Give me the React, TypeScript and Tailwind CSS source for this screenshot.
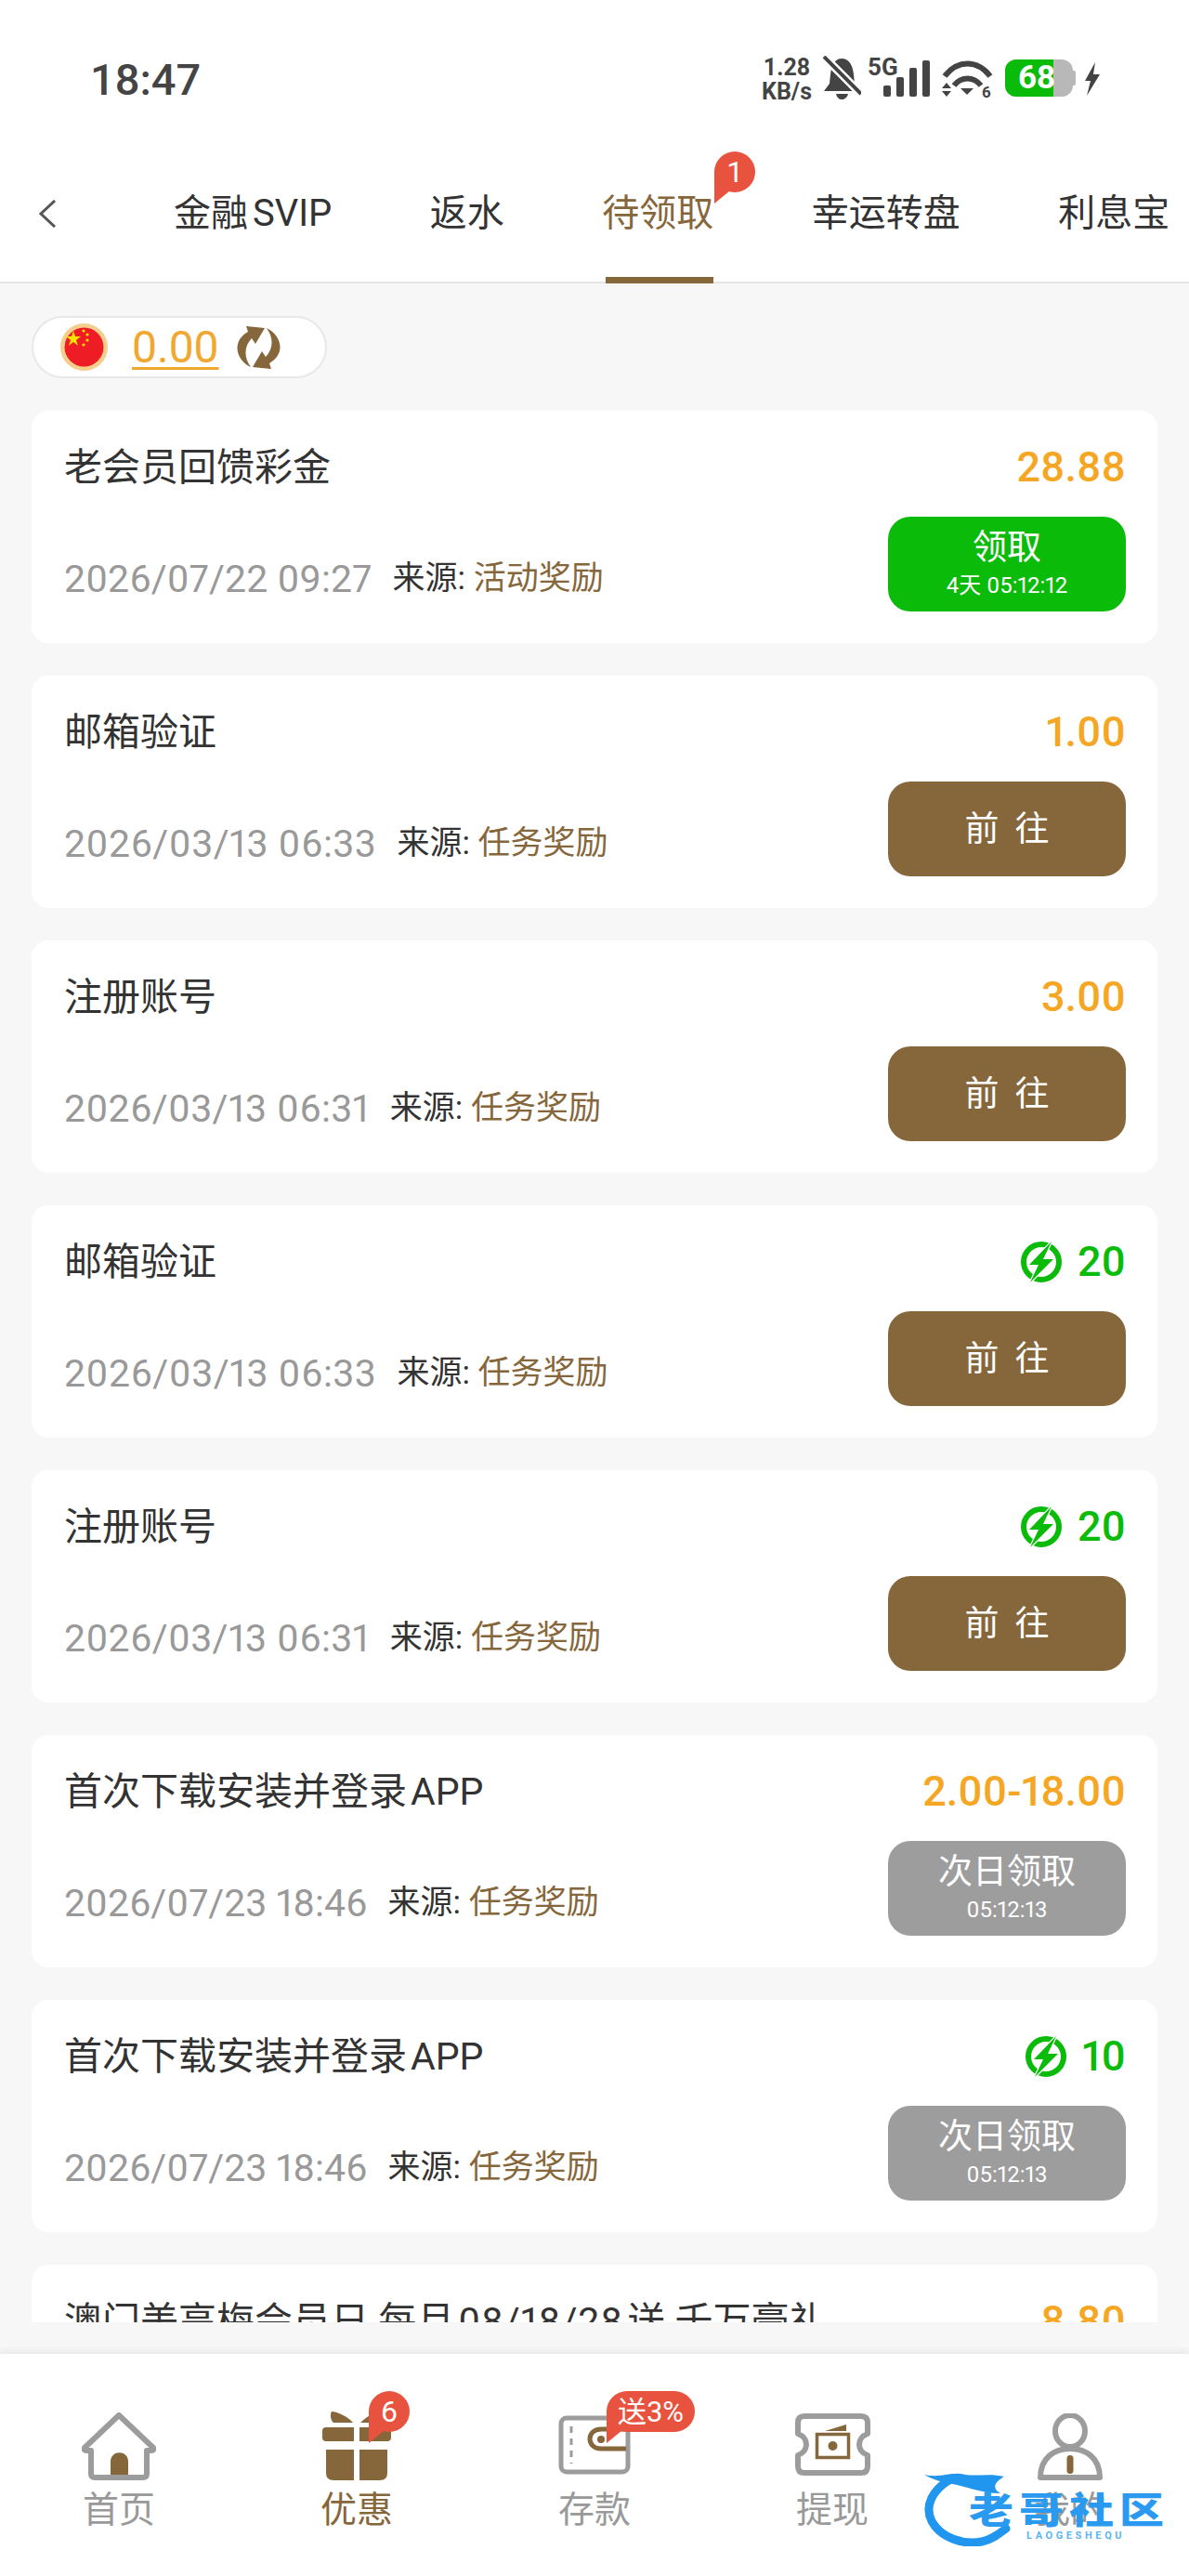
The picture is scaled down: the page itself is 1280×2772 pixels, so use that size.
import React from "react";

const FONT = "[font-family:Roboto,'Noto_Sans_CJK_SC',sans-serif]";

function Badge({ children, wide }: { children: React.ReactNode; wide?: boolean }) {
  return (
    <span className={`relative flex h-[44px] items-center justify-center rounded-full bg-[#e8533f] text-white ${wide ? "w-[95px] text-[31px]" : "w-[44px] text-[32px]"}`}>
      <svg className="absolute left-0 top-[20px]" width="22" height="36" viewBox="0 0 22 36">
        <path d="M0 0 L0 36 L22 18 Z" fill="#e8533f" />
      </svg>
      <span className="relative leading-none">{children}</span>
    </span>
  );
}

function Flag() {
  return (
    <svg width="51" height="51" viewBox="0 0 51 51">
      <circle cx="25.5" cy="25.5" r="25.5" fill="#f4cf8c" />
      <circle cx="25.5" cy="25.5" r="21" fill="#ee1c25" />
      <polygon points="14,8 16,14 22,14 17,18 19,24 14,20 9,24 11,18 6,14 12,14" fill="#ffe100" />
      <circle cx="25" cy="8" r="1.6" fill="#ffe100" />
      <circle cx="29" cy="12" r="1.6" fill="#ffe100" />
      <circle cx="29" cy="18" r="1.6" fill="#ffe100" />
      <circle cx="25" cy="23" r="1.6" fill="#ffe100" />
    </svg>
  );
}

function Refresh() {
  return (
    <svg width="47" height="48" viewBox="0 0 47 48" fill="#86673c">
      <path d="M10 1L30 3L20 20L16 14C8 22 7 34 15 45C0 38 -7 18 12 7Z" />
      <path d="M37 47L17 45L27 28L31 34C39 26 40 14 32 3C47 10 54 30 35 41Z" />
    </svg>
  );
}

function BoltCircle() {
  return (
    <svg width="44" height="46" viewBox="0 0 44 46">
      <circle cx="22" cy="23" r="19" fill="none" stroke="#0abb0a" strokeWidth="6" />
      <path d="M33 1 L9 26 L19 26 L10 45 L35 20 L24 20 Z" fill="#0abb0a" stroke="#fff" strokeWidth="2.5" paintOrder="stroke" strokeLinejoin="round" />
    </svg>
  );
}

type Item = {
  title: React.ReactNode;
  time: string;
  track: string;
  source: string;
  amount?: string;
  bolt?: string;
  btn: "claim" | "go" | "next";
  sub?: string;
};

const appTitle = (
  <>
    首次下载安装并登录<span className="ml-[4px]">APP</span>
  </>
);

const items: Item[] = [
  { title: "老会员回馈彩金", time: "2026/07/22 09:27", track: "tracking-[0.1px]", source: "活动奖励", amount: "28.88", btn: "claim", sub: "4天 05:12:12" },
  { title: "邮箱验证", time: "2026/03/13 06:33", track: "tracking-[0.5px]", source: "任务奖励", amount: "1.00", btn: "go" },
  { title: "注册账号", time: "2026/03/13 06:31", track: "tracking-[0.35px]", source: "任务奖励", amount: "3.00", btn: "go" },
  { title: "邮箱验证", time: "2026/03/13 06:33", track: "tracking-[0.5px]", source: "任务奖励", bolt: "20", btn: "go" },
  { title: "注册账号", time: "2026/03/13 06:31", track: "tracking-[0.35px]", source: "任务奖励", bolt: "20", btn: "go" },
  { title: appTitle, time: "2026/07/23 18:46", track: "tracking-normal", source: "任务奖励", amount: "2.00-18.00", btn: "next", sub: "05:12:13" },
  { title: appTitle, time: "2026/07/23 18:46", track: "tracking-normal", source: "任务奖励", bolt: "10", btn: "next", sub: "05:12:13" },
  {
    title: (
      <>
        澳门美高梅会员日 每月<span className="mx-[4px] tracking-[1px]">08/18/28</span>送 千万豪礼
      </>
    ),
    time: "2026/07/23 18:46",
    track: "tracking-normal",
    source: "任务奖励",
    amount: "8.80",
    btn: "go",
  },
];

function ActionButton({ item }: { item: Item }) {
  if (item.btn === "go") {
    return (
      <div className="flex h-[102px] w-[256px] items-center justify-center rounded-[24px] bg-[#86673c] pt-[2px] text-[37px] text-white [word-spacing:8px]">
        前&nbsp;往
      </div>
    );
  }
  return (
    <div className={`flex h-[102px] w-[256px] flex-col items-center justify-center rounded-[24px] text-white ${item.btn === "claim" ? "bg-[#0abb0a]" : "bg-[#9d9d9d]"}`}>
      <div className="text-[37px] leading-[46px]">{item.btn === "claim" ? "领取" : "次日领取"}</div>
      <div className="text-[24px] leading-[34px]">{item.sub}</div>
    </div>
  );
}

function Card({ item }: { item: Item }) {
  return (
    <div className="h-[250px] shrink-0 rounded-[18px] bg-white pl-[35px] pr-[34px] pt-[36px] proportional-nums">
      <div className="flex h-[50px] items-center justify-between">
        <div className="whitespace-nowrap text-[41px] leading-[50px] text-[#333]">{item.title}</div>
        {item.bolt ? (
          <div className="flex items-center gap-[17px] text-[45px] font-medium text-[#0abb0a]">
            <BoltCircle />
            <span>{item.bolt}</span>
          </div>
        ) : (
          <div className="text-[45px] font-medium leading-[50px] text-[#f5a623]">{item.amount}</div>
        )}
      </div>
      <div className="mt-[28px] flex items-start justify-between">
        <div className="mt-[43px] flex items-center gap-[22px]">
          <span className={`text-[41px] leading-[48px] text-[#999] ${item.track}`}>{item.time}</span>
          <span className="text-[35px] leading-[48px] text-[#333]">
            来源: <span className="text-[#86673c]">{item.source}</span>
          </span>
        </div>
        <ActionButton item={item} />
      </div>
    </div>
  );
}

function StatusBar() {
  return (
    <div className="flex h-[152px] items-start justify-between pl-[97px] pr-[95px] pt-[60px] text-[#444]">
      <div className="text-[47px] font-medium leading-[52px]">18:47</div>
      <div className="flex items-start">
        <div className="flex w-[54px] flex-col items-center text-[25px] font-bold leading-[26px]">
          <span>1.28</span>
          <span>KB/s</span>
        </div>
        <svg className="ml-[12px]" width="41" height="47" viewBox="0 0 41 47">
          <path d="M20 3 C28 3 32 10 33 20 L34 30 L40 38 L1 38 L7 30 L8 20 C9 10 13 3 20 3 Z" fill="#444" />
          <path d="M14 41 H27 C26 45 23 47 20 47 C17 47 15 45 14 41 Z" fill="#444" />
          <line x1="-1" y1="-1" x2="41" y2="41" stroke="#fff" strokeWidth="9" />
          <line x1="1" y1="1" x2="41" y2="41" stroke="#444" strokeWidth="4" />
        </svg>
        <div className="relative ml-[7px] h-[44px] w-[67px]">
          <span className="absolute left-0 top-0 text-[26px] font-bold leading-[24px]">5G</span>
          <svg className="absolute left-[17px] top-[5px]" width="50" height="39" viewBox="0 0 50 39" fill="#444">
            <rect x="0" y="27" width="8" height="12" rx="2" />
            <rect x="14" y="18" width="8" height="21" rx="2" />
            <rect x="28" y="8" width="8" height="31" rx="2" />
            <rect x="42" y="0" width="8" height="39" rx="2" />
          </svg>
        </div>
        <svg className="ml-[13px] mt-[5px] overflow-visible" width="54" height="41" viewBox="0 0 54 41" fill="#444">
          <path d="M3 17 C17 -1 38 -1 52 17" fill="none" stroke="#444" strokeWidth="6" />
          <path d="M13 27 C21 17 34 17 42 27" fill="none" stroke="#444" strokeWidth="6" />
          <path d="M20 30 H34 L27 37 Z" />
          <path d="M5 24 L10 30 H0 Z M0 33 H10 L5 39 Z" />
          <text x="43" y="40" fontSize="17" fontWeight="700" fontFamily="Roboto">6</text>
        </svg>
        <div className="relative ml-[14px] mt-[4px] flex h-[40px] w-[73px] overflow-hidden rounded-[12px] bg-[#b8b8b8]">
          <div className="h-full w-[52px] bg-[#0abb0a]" />
          <span className="absolute left-[14px] top-0 text-[35px] font-bold leading-[40px] text-white">68</span>
        </div>
        <div className="mt-[16px] h-[16px] w-[3px] rounded-r-[2px] bg-[#b8b8b8]" />
        <svg className="ml-[9px] mt-[7px]" width="18" height="36" viewBox="0 0 18 36" fill="#444">
          <path d="M12 0 L1 20 L7 20 L3 36 L17 13 L10 13 Z" />
        </svg>
      </div>
    </div>
  );
}

function Tabs() {
  return (
    <div className="flex h-[153px] items-center border-b-2 border-[#e5e5e5] pl-[41px] pt-[4px] text-[40px] text-[#333]">
      <svg width="20" height="30" viewBox="0 0 20 30" className="shrink-0">
        <path d="M18 1 L3 15 L18 29" fill="none" stroke="#555" strokeWidth="3" />
      </svg>
      <div className="ml-[126px] flex gap-[105.5px] whitespace-nowrap">
        <span>
          金融<span className="ml-[5px]">SVIP</span>
        </span>
        <span>返水</span>
        <span className="relative text-[#86673c]">
          待领取
          <span className="absolute -top-[37px] left-[121px]"><Badge>1</Badge></span>
          <span className="absolute left-[4px] right-0 top-[98px] h-[7px] bg-[#86673c]" />
        </span>
        <span>幸运转盘</span>
        <span>利息宝</span>
      </div>
    </div>
  );
}

function NavItem({ label, active, children }: { label: string; active?: boolean; children: React.ReactNode }) {
  return (
    <div className="flex flex-col items-center">
      <div className="relative flex h-[86px] w-[100px] items-end justify-center">{children}</div>
      <div className={`mt-[7px] text-[39px] leading-[50px] ${active ? "text-[#86673c]" : "text-[#999]"}`}>{label}</div>
    </div>
  );
}

function Watermark() {
  return (
    <div className="absolute left-[995px] top-[120px] h-[87px] w-[265px]">
      <svg className="absolute left-0 top-0" width="100" height="87" viewBox="0 0 100 87" fill="none">
        <path d="M30 14 C8 26 0 44 8 60 C18 78 42 86 62 82 C72 80 80 74 88 68" stroke="#2196ee" strokeWidth="9" strokeLinecap="round" />
        <path d="M0 10 C18 14 30 6 44 10 C58 12 70 8 86 12 C76 18 72 24 82 30 C60 30 44 22 30 20 C20 18 10 16 0 10 Z" fill="#2196ee" />
      </svg>
      <div className="absolute left-[48px] top-[32px] origin-top scale-y-[0.8] whitespace-nowrap text-[48px] font-black leading-[44px] tracking-[6px] text-[#2a9af0]">老哥社区</div>
      <div className="absolute left-[110px] top-[70px] whitespace-nowrap text-[11px] font-bold leading-[12px] tracking-[3.6px] text-[#5bb5f2]">LAOGESHEQU</div>
    </div>
  );
}

export default function App() {
  return (
    <div className={`flex h-[2772px] w-full flex-col overflow-hidden bg-[#f7f7f7] ${FONT}`}>
      <div className="shrink-0 bg-white">
        <StatusBar />
        <Tabs />
      </div>
      <div className="flex min-h-0 flex-1 flex-col overflow-hidden px-[34px] pt-[35px]">
        <div className="flex h-[67px] w-[318px] shrink-0 items-center rounded-full border-2 border-[#e8e8e8] bg-white pl-[29px]">
          <Flag />
          <span className="ml-[26px] text-[48px] leading-[50px] text-[#f0a830] underline decoration-[3px] underline-offset-[5px]">0.00</span>
          <span className="ml-[19px]"><Refresh /></span>
        </div>
        <div className="mt-[35px] flex flex-col gap-[35px]">
          {items.map((it, i) => (
            <Card key={i} item={it} />
          ))}
        </div>
      </div>
      <div className="h-[34px] shrink-0" />
      <div className="relative grid h-[239px] shrink-0 grid-cols-5 bg-white pt-[50px] shadow-[0_-3px_8px_rgba(0,0,0,0.07)]">
        <NavItem label="首页">
          <svg width="80" height="73" viewBox="0 0 80 73" fill="none">
            <path d="M31 72 V53 C31 40 50 40 50 53 V72 Z" fill="#86673c" />
            <path d="M40 3 L77 38 Q78 41 75 41 H70 V66 Q70 70 66 70 H14 Q10 70 10 66 V41 H5 Q2 41 3 38 Z" stroke="#9c9c9c" strokeWidth="6" strokeLinejoin="round" />
          </svg>
        </NavItem>
        <NavItem label="优惠" active>
          <svg width="74" height="74" viewBox="0 0 74 74" fill="#86673c">
            <path d="M10 0 C16 0 28 6 33 12 H12 C9 10 8 3 10 0 Z" />
            <path d="M41 12 C46 7 56 0 62 0 C66 3 64 10 60 12 Z" />
            <path d="M4 17 H34 V32 H4 Q0 32 0 28 V21 Q0 17 4 17 Z" />
            <path d="M40 17 H70 Q74 17 74 21 V28 Q74 32 70 32 H40 Z" />
            <path d="M4 41 H34 V74 H12 Q4 74 4 66 Z" />
            <path d="M40 41 H70 V66 Q70 74 62 74 H40 Z" />
          </svg>
          <span className="absolute -top-[10px] left-[63px]"><Badge>6</Badge></span>
        </NavItem>
        <NavItem label="存款">
          <svg className="mb-[5px]" width="78" height="65" viewBox="0 0 78 65" fill="none">
            <rect x="3" y="3" width="72" height="58" rx="6" stroke="#9c9c9c" strokeWidth="5" />
            <path d="M14 12 V52" stroke="#9c9c9c" strokeWidth="3" strokeDasharray="7 6" />
            <path d="M73 15 H46 C30 15 30 36 46 36 H73" stroke="#86673c" strokeWidth="5" />
            <circle cx="46" cy="26" r="4" fill="#86673c" />
          </svg>
          <span className="absolute -top-[10px] left-[63px]"><Badge wide>送3%</Badge></span>
        </NavItem>
        <NavItem label="提现">
          <svg className="mb-[5px]" width="81" height="67" viewBox="0 0 81 67" fill="none">
            <path d="M10 3 H71 Q78 3 78 10 V22 C66 26 66 41 78 45 V57 Q78 64 71 64 H10 Q3 64 3 57 V45 C15 41 15 26 3 22 V10 Q3 3 10 3 Z" stroke="#9c9c9c" strokeWidth="6" strokeLinejoin="round" />
            <rect x="23.5" y="22.5" width="34" height="25" stroke="#86673c" strokeWidth="3.5" />
            <circle cx="40.5" cy="35" r="5" fill="#86673c" />
            <path d="M32 19 L55 12 V19 Z" fill="#86673c" />
          </svg>
        </NavItem>
        <NavItem label="我的">
          <svg width="70" height="72" viewBox="0 0 70 72" fill="none">
            <ellipse cx="35" cy="19" rx="16" ry="17" stroke="#9c9c9c" strokeWidth="6" />
            <path d="M3 69 C3 48 18 38 35 38 C52 38 67 48 67 69 Z" stroke="#9c9c9c" strokeWidth="6" strokeLinejoin="round" fill="#fff" />
            <rect x="31.5" y="45" width="7" height="20" rx="3.5" fill="#86673c" />
          </svg>
        </NavItem>
        <Watermark />
      </div>
    </div>
  );
}
